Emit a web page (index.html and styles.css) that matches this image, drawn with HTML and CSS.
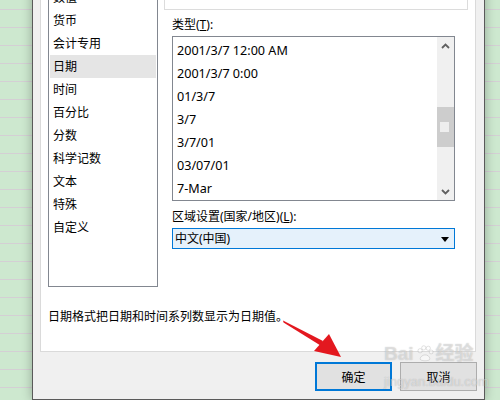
FILE: index.html
```html
<!DOCTYPE html>
<html lang="zh-CN">
<head>
<meta charset="utf-8">
<title>设置单元格格式</title>
<link rel="stylesheet" href="styles.css">
</head>
<body>
<div class="dialog">
  <div class="panel">
    <div class="top">
      <div class="cats">
        <div class="cat">数值</div>
        <div class="cat">货币</div>
        <div class="cat">会计专用</div>
        <div class="cat sel">日期</div>
        <div class="cat">时间</div>
        <div class="cat">百分比</div>
        <div class="cat">分数</div>
        <div class="cat">科学记数</div>
        <div class="cat">文本</div>
        <div class="cat">特殊</div>
        <div class="cat">自定义</div>
      </div>
      <div class="right">
        <div class="sample"></div>
        <div class="lbl lbl1">类型(<u>T</u>):</div>
        <div class="types">
          <div class="type-items">
            <div class="type">2001/3/7 12:00 AM</div>
            <div class="type">2001/3/7 0:00</div>
            <div class="type">01/3/7</div>
            <div class="type">3/7</div>
            <div class="type">3/7/01</div>
            <div class="type">03/07/01</div>
            <div class="type">7-Mar</div>
          </div>
          <div class="sb">
            <div class="sb-btn"><svg width="9" height="6" viewBox="0 0 9 6"><polyline points="1,5 4.5,1.5 8,5" fill="none" stroke="#606060" stroke-width="1.8"/></svg></div>
            <div class="sb-track"><div class="thumb"><div class="grip"></div></div></div>
            <div class="sb-btn"><svg width="9" height="6" viewBox="0 0 9 6"><polyline points="1,1 4.5,4.5 8,1" fill="none" stroke="#606060" stroke-width="1.8"/></svg></div>
          </div>
        </div>
        <div class="lbl lbl2">区域设置(国家/地区)(<u>L</u>):</div>
        <div class="combo"><span>中文(中国)</span><span class="caret"></span></div>
      </div>
    </div>
    <div class="desc">日期格式把日期和时间系列数显示为日期值。</div>
  </div>
  <div class="btns">
    <div class="btn ok">确定</div>
    <div class="btn">取消</div>
  </div>
</div>
<svg class="arrow" width="500" height="400" viewBox="0 0 500 400">
  <polygon points="283,320.5 323,341 320.5,345.5 283.5,322.5" fill="#e3181f"/>
  <polygon points="341,357 314,351 329,334" fill="#e3181f"/>
</svg>
<div class="wm">
  <div class="wm-logo">Bai<svg width="18" height="18" viewBox="0 0 22 22"><circle cx="5" cy="7" r="2.6"/><circle cx="9.5" cy="3.5" r="2.6"/><circle cx="15" cy="4" r="2.6"/><circle cx="18.5" cy="8.5" r="2.4"/><path d="M5 17 C6 11 16 10 17 17 C17 20 5 20 5 17 Z"/></svg>经验</div>
  <div class="wm-url">jingyan.baidu.com</div>
</div>
</body>
</html>
```
FILE: styles.css
```css
html, body {
  margin: 0;
  padding: 0;
}
body {
  width: 500px;
  height: 400px;
  overflow: hidden;
  position: relative;
  font-family: "Noto Sans", "Noto Sans CJK SC", sans-serif;
  font-size: 12px;
  color: #000;
  background-color: #cde8cf;
  background-image: repeating-linear-gradient(to bottom, transparent 0, transparent 9px, #d4cfd4 9px, #d4cfd4 10px, transparent 10px, transparent 18px);
}
.dialog {
  box-sizing: border-box;
  margin: -40px 0 0 32px;
  width: 453px;
  height: 440px;
  padding: 0 8px 0 7px;
  background: #f0f0f0;
  border: 1px solid #5a5a5a;
  border-top: none;
  box-shadow: 0 0 10px rgba(0, 0, 0, 0.28);
}
.panel {
  box-sizing: border-box;
  height: 392px;
  padding: 20px 0 0 7px;
  background: #fff;
  border: 1px solid #dadada;
  border-top: none;
}
.top {
  display: flex;
  align-items: flex-start;
}
.cats {
  box-sizing: border-box;
  width: 110px;
  height: 307px;
  padding-top: 6px;
  border: 1px solid #828790;
  border-top: none;
  flex: none;
}
.cat {
  height: 23px;
  line-height: 23px;
  margin: 0 1px;
  padding-left: 3px;
  white-space: nowrap;
}
.cat.sel {
  background: #e5e5e5;
}
.right {
  flex: 1;
  margin-left: 6px;
  display: flex;
  flex-direction: column;
}
.sample {
  box-sizing: border-box;
  width: 304px;
  height: 30px;
  border: 1px solid #dcdcdc;
  border-top: none;
}
.lbl {
  margin-left: 8px;
  line-height: 16px;
  height: 16px;
  white-space: nowrap;
}
.lbl1 {
  margin-top: 7px;
  margin-bottom: 3px;
}
.lbl2 {
  margin-top: 8px;
  margin-bottom: 3px;
}
.types {
  box-sizing: border-box;
  margin-left: 8px;
  width: 283px;
  height: 165px;
  border: 1px solid #828790;
  display: flex;
}
.type-items {
  flex: 1;
  padding-top: 2px;
}
.type {
  height: 23px;
  line-height: 23px;
  padding-left: 4px;
  font-size: 12.6px;
  white-space: nowrap;
}
.sb {
  width: 17px;
  background: #f0f0f0;
  display: flex;
  flex-direction: column;
}
.sb-btn {
  height: 17px;
  display: flex;
  align-items: center;
  justify-content: center;
}
.sb-track {
  flex: 1;
}
.thumb {
  margin-top: 53px;
  height: 40px;
  background: #cdcdcd;
  padding: 15px 0 0 3px;
  box-sizing: border-box;
}
.grip {
  width: 9px;
  height: 10px;
  background: #eeeeee;
}
.combo {
  box-sizing: border-box;
  margin-left: 8px;
  width: 283px;
  height: 21px;
  border: 1px solid #0078d7;
  background: #e5f1fb;
  display: flex;
  align-items: center;
  justify-content: space-between;
  padding: 0 5px 0 2px;
  line-height: 19px;
}
.caret {
  width: 0;
  height: 0;
  border-left: 4px solid transparent;
  border-right: 4px solid transparent;
  border-top: 5px solid #000;
  margin-top: 1px;
}
.desc {
  margin-top: 22px;
  line-height: 16px;
  white-space: nowrap;
}
.btns {
  display: flex;
  justify-content: flex-end;
  gap: 8px;
  margin-top: 10px;
  margin-right: -1px;
}
.btn {
  box-sizing: border-box;
  width: 77px;
  height: 29px;
  background: #e1e1e1;
  border: 1px solid #adadad;
  display: flex;
  align-items: center;
  justify-content: center;
}
.btn.ok {
  border: 2px solid #0078d7;
}
.arrow {
  position: absolute;
  left: 0;
  top: 0;
  pointer-events: none;
}
.wm {
  position: absolute;
  left: 384px;
  top: 340px;
  color: rgba(255, 255, 255, 0.45);
  text-shadow: 0 0 1px rgba(90, 90, 90, 0.4);
  pointer-events: none;
}
.wm-logo {
  display: flex;
  align-items: center;
  font-family: "Liberation Sans", "Noto Sans CJK SC", sans-serif;
  font-size: 19px;
  font-weight: bold;
  line-height: 28px;
  white-space: nowrap;
}
.wm-logo svg {
  fill: rgba(255, 255, 255, 0.45);
  stroke: rgba(90, 90, 90, 0.35);
  stroke-width: 0.6;
  margin: 0 2px;
}
.wm-url {
  font-family: "Liberation Sans", sans-serif;
  font-size: 13px;
  line-height: 16px;
  margin-top: 6px;
  white-space: nowrap;
}
```
